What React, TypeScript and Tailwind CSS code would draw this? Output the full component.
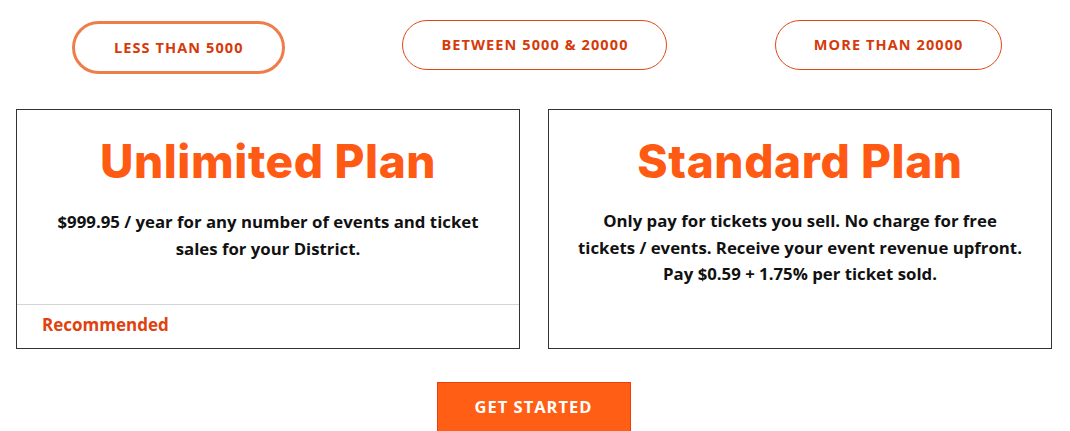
import React from "react";

const orange = "#ff5a14";

export default function App() {
  return (
    <div className="w-[1070px] h-[431px] overflow-hidden bg-white" style={{ fontFamily: '"Open Sans", sans-serif' }}>
      <div className="grid grid-cols-3 pt-[20px] h-[109px]">
        <div className="flex justify-center pl-[1px]">
          <button className="mt-[1px] w-[213px] h-[53px] rounded-full border-[3px] border-[#ef7d4c] text-[#d63a0a] text-[14.5px] font-bold tracking-[1.1px]">
            LESS THAN 5000
          </button>
        </div>
        <div className="flex justify-center">
          <button className="w-[265px] h-[50px] rounded-full border-[1.5px] border-[#e04812] text-[#d63a0a] text-[14.5px] font-bold tracking-[1.1px]">
            BETWEEN 5000 &amp; 20000
          </button>
        </div>
        <div className="flex justify-center pr-[6px]">
          <button className="w-[227px] h-[50px] rounded-full border-[1.5px] border-[#e04812] text-[#d63a0a] text-[14.5px] font-bold tracking-[1.1px]">
            MORE THAN 20000
          </button>
        </div>
      </div>
      <div className="grid grid-cols-2 gap-[28px] pl-[16px] pr-[18px]">
        <div className="h-[240px] border border-[#333] flex flex-col">
          <div className="flex-1 flex flex-col items-center pt-[26px]">
            <h2 className="text-[46px] leading-[50px] font-extrabold tracking-[0.6px]" style={{ color: orange, fontFamily: "Inter, sans-serif" }}>
              Unlimited Plan
            </h2>
            <p className="mt-[22px] text-[16.8px] leading-[27px] font-bold text-[#111] text-center px-[30px]">
              $999.95 / year for any number of events and ticket sales for your District.
            </p>
          </div>
          <div className="h-[44px] border-t border-[#d4d4d4] flex items-center pl-[25px] pb-[4px]">
            <span className="text-[17px] font-bold text-[#e0420f]">Recommended</span>
          </div>
        </div>
        <div className="h-[240px] border border-[#333] flex flex-col items-center pt-[26px]">
          <h2 className="text-[46px] leading-[50px] font-extrabold tracking-[0.6px]" style={{ color: orange, fontFamily: "Inter, sans-serif" }}>
            Standard Plan
          </h2>
          <p className="mt-[22px] text-[16.8px] leading-[26.5px] font-bold text-[#111] text-center px-[26px]">
            Only pay for tickets you sell. No charge for free tickets / events. Receive your event revenue upfront. Pay $0.59 + 1.75% per ticket sold.
          </p>
        </div>
      </div>
      <div className="flex justify-center pt-[33px] pr-[3px]">
        <button className="w-[194px] h-[52px] bg-[#ff5e14] border border-[#e8400a] text-white text-[16.5px] font-bold tracking-[1px] pb-[2px]">
          GET STARTED
        </button>
      </div>
    </div>
  );
}
